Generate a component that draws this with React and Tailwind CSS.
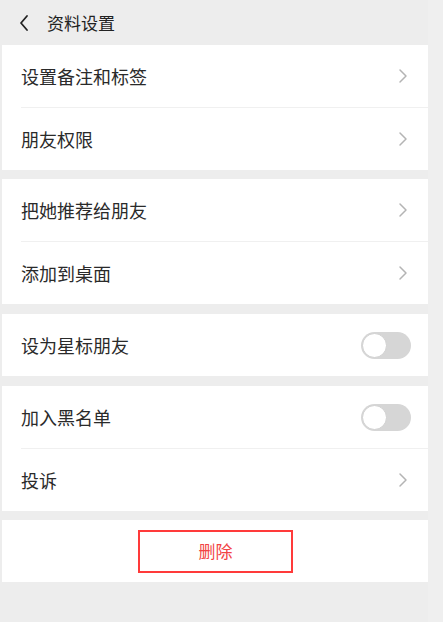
import React, { useState } from "react";

const font = { fontFamily: '"Noto Sans CJK SC", "Noto Sans", sans-serif' };

function Chevron() {
  return (
    <svg width="10" height="16" viewBox="0 0 10 16" fill="none">
      <path d="M2 2l6 6-6 6" stroke="#b4b4b4" strokeWidth="1.5" strokeLinecap="round" strokeLinejoin="round" />
    </svg>
  );
}

function Toggle({ on, onClick }) {
  return (
    <div
      onClick={onClick}
      className={`relative -mr-[3px] w-[50px] h-[27px] rounded-full cursor-pointer ${on ? "bg-[#07c160]" : "bg-[#d6d6d6]"}`}
    >
      <div
        className={`absolute top-[1px] w-[25px] h-[25px] rounded-full bg-white border border-[#d0d0d0] ${on ? "left-[24px]" : "left-[1px]"}`}
      />
    </div>
  );
}

function Row({ label, right, divider }) {
  return (
    <div className="flex flex-col">
      {divider && <div className="ml-[19px] h-px bg-[#f0f0f0]" />}
      <div className="flex items-center justify-between h-[62px] pl-[19px] pr-[20px]">
        <span className="text-[18px] text-[#2a2a2a]">{label}</span>
        {right}
      </div>
    </div>
  );
}

export default function App() {
  const [star, setStar] = useState(false);
  const [black, setBlack] = useState(false);

  return (
    <div className="w-[443px] h-[622px] bg-[#ededed] flex overflow-hidden" style={font}>
      <div className="w-[428px] flex flex-col">
        <div className="h-[45px] flex items-center pl-[18px]">
          <svg width="12" height="18" viewBox="0 0 12 18" fill="none">
            <path d="M9 2L3 9l6 7" stroke="#222" strokeWidth="1.8" strokeLinecap="round" strokeLinejoin="round" />
          </svg>
          <span className="ml-[17px] text-[17px] text-[#222]">资料设置</span>
        </div>

        <div className="ml-[2px] bg-white">
          <Row label="设置备注和标签" right={<Chevron />} />
          <Row label="朋友权限" right={<Chevron />} divider />
        </div>

        <div className="ml-[2px] mt-[9px] bg-white">
          <Row label="把她推荐给朋友" right={<Chevron />} />
          <Row label="添加到桌面" right={<Chevron />} divider />
        </div>

        <div className="ml-[2px] mt-[10px] bg-white">
          <Row label="设为星标朋友" right={<Toggle on={star} onClick={() => setStar(!star)} />} />
        </div>

        <div className="ml-[2px] mt-[10px] bg-white">
          <Row label="加入黑名单" right={<Toggle on={black} onClick={() => setBlack(!black)} />} />
          <Row label="投诉" right={<Chevron />} divider />
        </div>

        <div className="ml-[2px] mt-[9px] bg-white h-[62px] flex items-center">
          <button className="ml-[136px] w-[155px] h-[43px] border-2 border-[#ff3a3a] text-[17px] text-[#f24444] flex items-center justify-center">
            删除
          </button>
        </div>
      </div>
      <div className="flex-1 bg-[#efefef]" />
    </div>
  );
}
